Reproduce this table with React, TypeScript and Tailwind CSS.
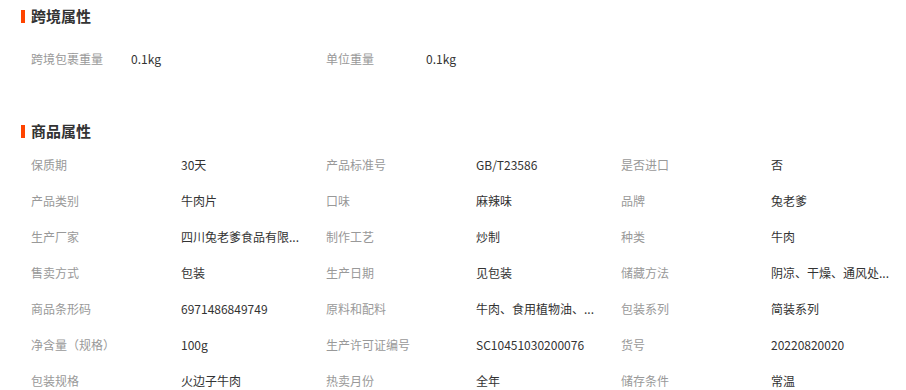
const crossBorder = [
  ["跨境包裹重量", "0.1kg"],
  ["单位重量", "0.1kg"],
];

const attrs = [
  ["保质期", "30天"],
  ["产品标准号", "GB/T23586"],
  ["是否进口", "否"],
  ["产品类别", "牛肉片"],
  ["口味", "麻辣味"],
  ["品牌", "兔老爹"],
  ["生产厂家", "四川兔老爹食品有限..."],
  ["制作工艺", "炒制"],
  ["种类", "牛肉"],
  ["售卖方式", "包装"],
  ["生产日期", "见包装"],
  ["储藏方法", "阴凉、干燥、通风处..."],
  ["商品条形码", "6971486849749"],
  ["原料和配料", "牛肉、食用植物油、..."],
  ["包装系列", "简装系列"],
  ["净含量（规格）", "100g"],
  ["生产许可证编号", "SC10451030200076"],
  ["货号", "20220820020"],
  ["包装规格", "火边子牛肉"],
  ["热卖月份", "全年"],
  ["储存条件", "常温"],
];

function Title({ text }: { text: string }) {
  return (
    <div className="flex items-center h-[20px] pl-[21px]">
      <span className="w-[4px] h-[13px] bg-[#ff4400]" />
      <span className="ml-[6px] text-[15px] font-bold text-[#333]">{text}</span>
    </div>
  );
}

export default function App() {
  return (
    <div
      className="w-[906px] h-[390px] overflow-hidden bg-white pt-[6px]"
      style={{ fontFamily: '"Noto Sans CJK SC", "Noto Sans", sans-serif' }}
    >
      {/* 跨境属性 */}
      <Title text="跨境属性" />
      <div className="grid grid-cols-[295px_295px] pl-[31px] mt-[15px]">
        {crossBorder.map(([k, v]) => (
          <div key={k} className="flex items-center h-[36px] text-[12px]">
            <span className="w-[100px] text-[#999]">{k}</span>
            <span className="text-[#333]">{v}</span>
          </div>
        ))}
      </div>

      {/* 商品属性 */}
      <div className="mt-[44px]">
        <Title text="商品属性" />
      </div>
      <div className="grid grid-cols-[295px_295px_285px] pl-[31px] mt-[6px]">
        {attrs.map(([k, v]) => (
          <div key={k} className="flex items-center h-[36px] text-[12px]">
            <span className="w-[150px] shrink-0 text-[#999]">{k}</span>
            <span className="whitespace-nowrap text-[#333]">{v}</span>
          </div>
        ))}
      </div>
    </div>
  );
}
